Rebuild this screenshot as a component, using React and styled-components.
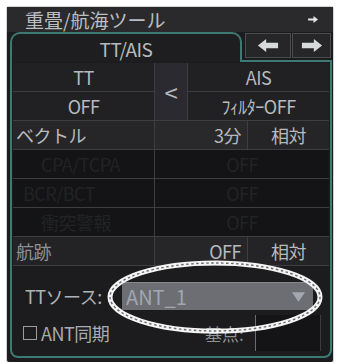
import React from "react";
import styled, { createGlobalStyle } from "styled-components";

const GlobalStyle = createGlobalStyle`
  html, body {
    margin: 0;
    padding: 0;
    background: #ffffff;
  }
  body {
    font-family: "Noto Sans CJK JP", "Noto Sans", sans-serif;
  }
`;

const TEAL = "#3d7a74";
const TEXT = "#b6babe";

export default function App() {
  return (
    <Page>
      <GlobalStyle />
      <Panel>
        <TitleBar>
          <span>重畳/航海ツール</span>
          <SmallArrow viewBox="0 0 12 10">
            <path d="M0 4 H6 V1 L11 5 L6 9 V6 H0 Z" fill="#e4e6e6" />
          </SmallArrow>
        </TitleBar>

        <TabRow>
          <Tab>TT/AIS</Tab>
          <TabFiller>
            <ArrowButton $w={44}>
              <ArrowIcon viewBox="0 0 24 16">
                <path d="M1 8 L10 1 V5 H23 V11 H10 V15 Z" fill="#d6dada" />
              </ArrowIcon>
            </ArrowButton>
            <ArrowButton $w={37}>
              <ArrowIcon viewBox="0 0 24 16">
                <path d="M23 8 L14 1 V5 H1 V11 H14 V15 Z" fill="#d6dada" />
              </ArrowIcon>
            </ArrowButton>
          </TabFiller>
        </TabRow>

        <Content>
          <Table>
            <TopGrid>
              <Cell>TT</Cell>
              <SwapCell>&lt;</SwapCell>
              <Cell>AIS</Cell>
              <Cell>OFF</Cell>
              <Cell>ﾌｨﾙﾀｰOFF</Cell>
            </TopGrid>

            <SplitRow>
              <Cell $align="flex-start" $bg="#262628">ベクトル</Cell>
              <Cell $align="flex-end" $bg="#29292b">3分</Cell>
              <Cell $bg="#252527">相対</Cell>
            </SplitRow>

            <DimRow>
              <Cell $dim $align="flex-start" $pad={28}>CPA/TCPA</Cell>
              <Cell $dim>OFF</Cell>
            </DimRow>
            <DimRow>
              <Cell $dim $align="flex-start" $pad={10}>BCR/BCT</Cell>
              <Cell $dim>OFF</Cell>
            </DimRow>
            <DimRow>
              <Cell $dim $align="flex-start" $pad={28}>衝突警報</Cell>
              <Cell $dim>OFF</Cell>
            </DimRow>

            <SplitRow>
              <Cell $align="flex-start" $bg="#232325" $color="#8e9296">航跡</Cell>
              <Cell $align="flex-end" $bg="#262628">OFF</Cell>
              <Cell $bg="#242426">相対</Cell>
            </SplitRow>
          </Table>

          <SourceRow>
            <Label>TTソース:</Label>
            <Dropdown>
              <span>ANT_1</span>
              <Caret viewBox="0 0 14 10">
                <path d="M0 0 H14 L7 10 Z" fill="#a4a8ae" />
              </Caret>
            </Dropdown>
          </SourceRow>

          <SyncRow>
            <CheckLabel>
              <CheckBox />
              ANT同期
            </CheckLabel>
            <BaseLabel>基点:</BaseLabel>
            <BaseField />
          </SyncRow>
        </Content>

        <Highlight viewBox="0 0 220 76">
          <ellipse cx="110" cy="38" rx="105" ry="34" fill="none" stroke="#f4f4f4" strokeWidth="5" />
          <ellipse
            cx="110"
            cy="38"
            rx="105"
            ry="34"
            fill="none"
            stroke="#6a6a6a"
            strokeWidth="1.4"
            strokeDasharray="2.5 2.5"
          />
        </Highlight>
      </Panel>
    </Page>
  );
}

const Page = styled.div`
  padding: 7px 0 0 7px;
`;

const Panel = styled.div`
  position: relative;
  width: 326px;
  height: 355px;
  background: #1c1c1e;
  box-shadow: 0 0 0 1px #d4d4d4;
  border-radius: 2px;
  display: flex;
  flex-direction: column;
  color: ${TEXT};
  font-size: 18px;
`;

const TitleBar = styled.div`
  height: 25px;
  background: #2a2a2c;
  display: flex;
  align-items: center;
  justify-content: space-between;
  padding: 0 14px 0 18px;
  color: #babec2;
  font-size: 19px;
  line-height: 1;
`;

const SmallArrow = styled.svg`
  width: 11px;
  height: 9px;
`;

const TabRow = styled.div`
  height: 30px;
  display: flex;
  align-items: flex-end;
  margin: 0 1px 0 3px;
`;

const Tab = styled.div`
  width: 228px;
  height: 28px;
  border: 2px solid ${TEAL};
  border-bottom: none;
  border-radius: 10px 10px 0 0;
  background: #1e1e20;
  display: flex;
  align-items: center;
  justify-content: center;
  font-size: 19px;
  letter-spacing: -0.5px;
`;

const TabFiller = styled.div`
  flex: 1;
  align-self: stretch;
  border-bottom: 2px solid ${TEAL};
  display: flex;
  justify-content: flex-end;
  gap: 1px;
  padding: 1px 1px 2px 0;
`;

const ArrowButton = styled.div`
  width: ${(p) => p.$w}px;
  background: #262628;
  border: 1px solid #4a4c4e;
  display: flex;
  align-items: center;
  justify-content: center;
`;

const ArrowIcon = styled.svg`
  width: 22px;
  height: 15px;
`;

const Content = styled.div`
  flex: 1;
  margin: 0 1px 4px 3px;
  border: 2px solid ${TEAL};
  border-top: none;
  border-radius: 0 0 8px 8px;
  padding: 1px 1px 0 1px;
  display: flex;
  flex-direction: column;
`;

const Table = styled.div`
  display: flex;
  flex-direction: column;
  gap: 1px;
  background: #3c3e41;
  padding-bottom: 1px;
`;

const TopGrid = styled.div`
  display: grid;
  grid-template-columns: 141px 32px 1fr;
  grid-template-rows: 28px 28px;
  gap: 1px;
`;

const Cell = styled.div`
  background: ${(p) => (p.$dim ? "#141416" : p.$bg || "#212123")};
  color: ${(p) => (p.$dim ? "#222325" : p.$color || TEXT)};
  height: 28px;
  display: flex;
  align-items: center;
  justify-content: ${(p) => p.$align || "center"};
  padding: 0 ${(p) => (p.$align === "flex-end" ? 6 : p.$pad ?? 3)}px;
  font-size: 18px;
  letter-spacing: -0.5px;
  white-space: nowrap;
  box-sizing: border-box;
`;

const SwapCell = styled(Cell)`
  grid-column: 2;
  grid-row: 1 / span 2;
  height: auto;
  background: #2a2a30;
  font-size: 24px;
`;

const SplitRow = styled.div`
  display: grid;
  grid-template-columns: 141px 92px 1fr;
  gap: 1px;
`;

const DimRow = styled.div`
  display: grid;
  grid-template-columns: 141px 1fr;
  gap: 1px;
`;

const SourceRow = styled.div`
  display: flex;
  align-items: center;
  margin-top: 16px;
  padding-left: 12px;
  height: 28px;
`;

const Label = styled.span`
  width: 97px;
  font-size: 18px;
  letter-spacing: -0.5px;
  color: #aeb2b6;
`;

const Dropdown = styled.div`
  width: 191px;
  height: 28px;
  box-sizing: border-box;
  background: #6c6e74;
  border-top: 1px solid #85878c;
  display: flex;
  align-items: center;
  justify-content: space-between;
  padding: 0 8px 0 4px;
  color: #a2a6ae;
  font-size: 20px;
`;

const Caret = styled.svg`
  width: 13px;
  height: 10px;
`;

const SyncRow = styled.div`
  display: flex;
  align-items: center;
  margin-top: 5px;
  padding-left: 10px;
  height: 36px;
`;

const CheckLabel = styled.div`
  display: flex;
  align-items: center;
  gap: 4px;
  font-size: 18px;
  letter-spacing: -0.5px;
  color: #a8acb0;
  width: 182px;
`;

const CheckBox = styled.span`
  width: 12px;
  height: 12px;
  border: 1.5px solid #9a9ea2;
`;

const BaseLabel = styled.span`
  width: 50px;
  font-size: 17px;
  color: #8e9296;
`;

const BaseField = styled.div`
  width: 64px;
  align-self: stretch;
  background: #141416;
  border-left: 1px solid #6a6c70;
  border-right: 1px solid #3a3c3e;
`;

const Highlight = styled.svg`
  position: absolute;
  left: 98px;
  top: 252px;
  width: 220px;
  height: 76px;
  pointer-events: none;
`;
